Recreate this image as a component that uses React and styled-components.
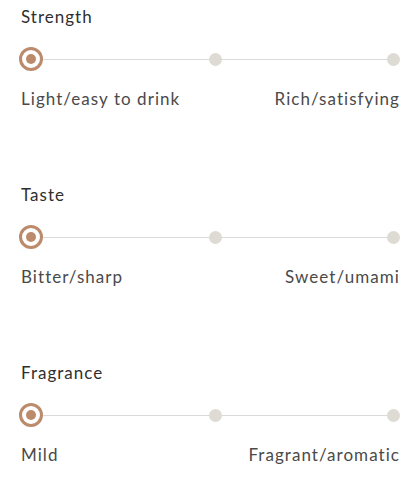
import React from "react";
import styled, { createGlobalStyle } from "styled-components";

const Global = createGlobalStyle`
  body { margin: 0; background: #fff; }
  * { box-sizing: border-box; }
`;

const Page = styled.div`
  display: flex;
  flex-direction: column;
  gap: 74px;
  padding: 6px 17px 0 19px;
  font-family: Lato, "Open Sans", sans-serif;
  color: #4a4a4a;
`;

const Section = styled.section`
  display: flex;
  flex-direction: column;
`;

const Title = styled.h3`
  margin: 0 0 0 2px;
  font-size: 17px;
  font-weight: 400;
  line-height: 22px;
  letter-spacing: 1px;
  color: #2f2f2f;
`;

const Track = styled.div`
  position: relative;
  margin-top: 19px;
  height: 24px;
  display: flex;
  align-items: center;
  justify-content: space-between;
  &::before {
    content: "";
    position: absolute;
    left: 12px;
    right: 6px;
    top: 50%;
    height: 1px;
    background: #dcdad6;
  }
`;

const Knob = styled.span`
  position: relative;
  width: 24px;
  height: 24px;
  border-radius: 50%;
  border: 3px solid #bb8b6b;
  background: #fff;
  display: flex;
  align-items: center;
  justify-content: center;
  &::after {
    content: "";
    width: 10px;
    height: 10px;
    border-radius: 50%;
    background: #bb8b6b;
  }
`;

const Dot = styled.span`
  position: relative;
  width: 13px;
  height: 13px;
  border-radius: 50%;
  background: #dedbd5;
`;

const Labels = styled.div`
  margin: 17px 0 0 2px;
  display: flex;
  justify-content: space-between;
  font-size: 17px;
  font-weight: 400;
  line-height: 22px;
  letter-spacing: 1.05px;
  color: #4a4a4a;
`;

const data = [
  { title: "Strength", left: "Light/easy to drink", right: "Rich/satisfying" },
  { title: "Taste", left: "Bitter/sharp", right: "Sweet/umami" },
  { title: "Fragrance", left: "Mild", right: "Fragrant/aromatic" },
];

export default function App() {
  return (
    <Page>
      <Global />
      {data.map((d) => (
        <Section key={d.title}>
          <Title>{d.title}</Title>
          <Track>
            <Knob />
            <Dot />
            <Dot />
          </Track>
          <Labels>
            <span>{d.left}</span>
            <span>{d.right}</span>
          </Labels>
        </Section>
      ))}
    </Page>
  );
}
